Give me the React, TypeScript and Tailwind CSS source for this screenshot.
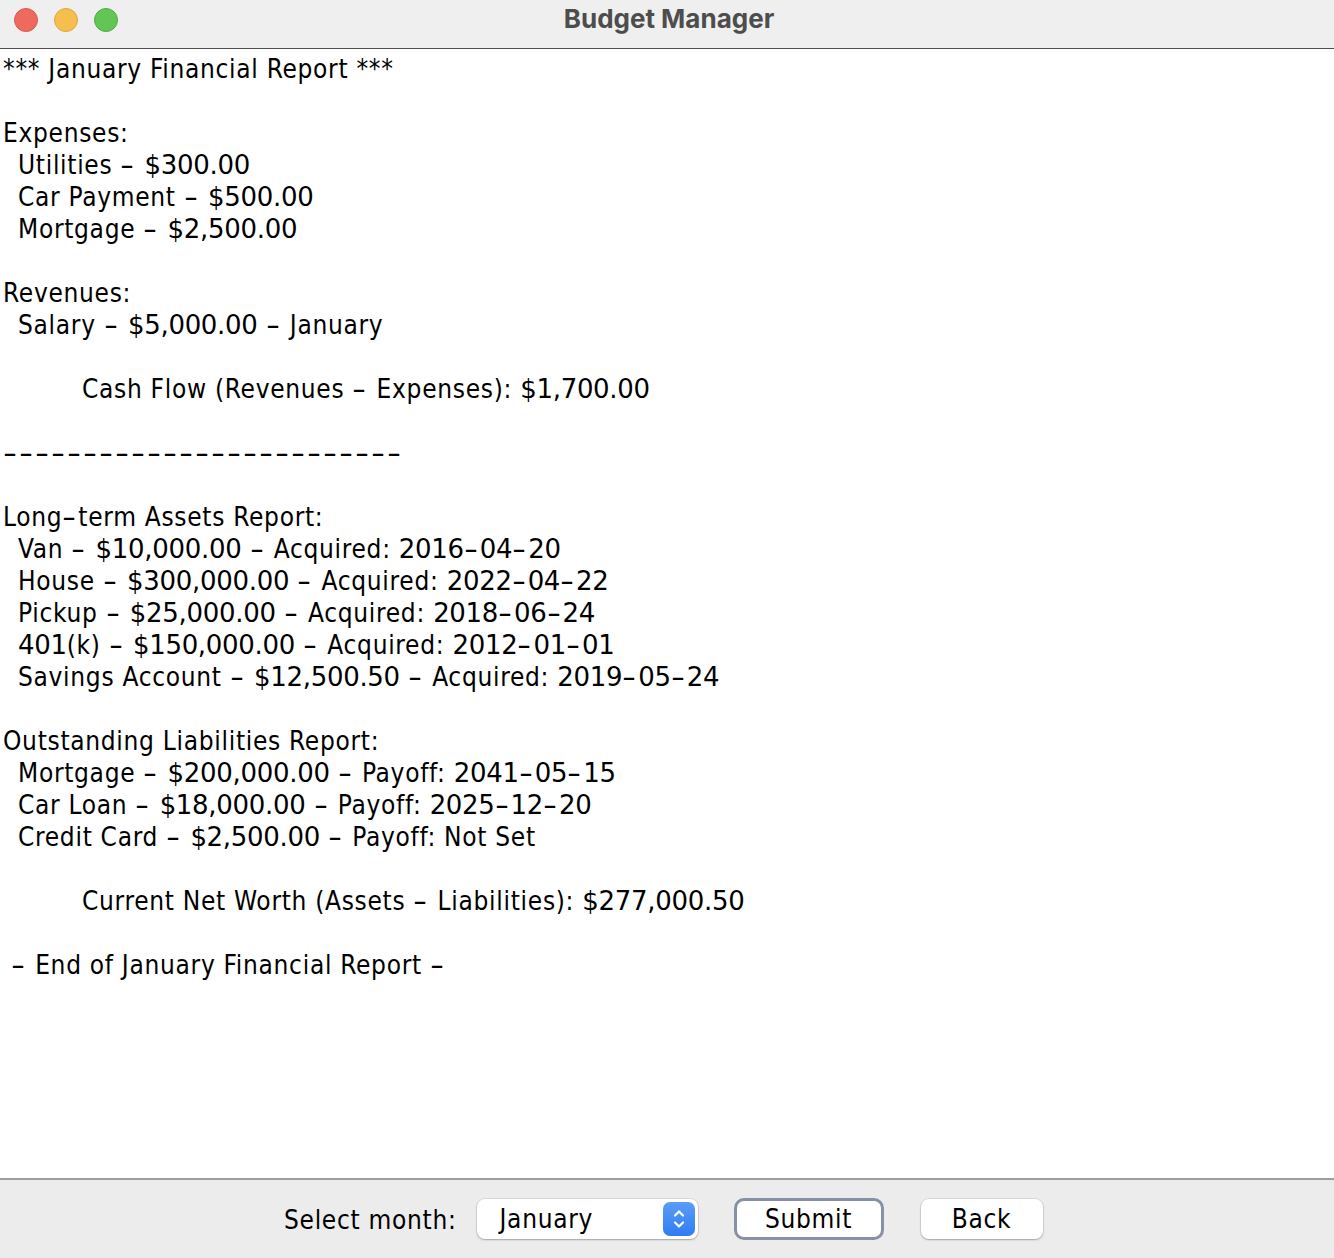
import React from "react";

type Line = { text: string; indent?: number };

// pl per indent level: none, two spaces, tab, the one-space end line
const indentCls = ["pl-[3px]", "pl-[18px]", "pl-[82px]", "pl-[11px]"];

const report: Line[] = [
  { text: "*** January Financial Report ***" },
  { text: "" },
  { text: "Expenses:" },
  { text: "Utilities - $300.00", indent: 1 },
  { text: "Car Payment - $500.00", indent: 1 },
  { text: "Mortgage - $2,500.00", indent: 1 },
  { text: "" },
  { text: "Revenues:" },
  { text: "Salary - $5,000.00 - January", indent: 1 },
  { text: "" },
  { text: "Cash Flow (Revenues - Expenses): $1,700.00", indent: 2 },
  { text: "" },
  { text: "-------------------------" },
  { text: "" },
  { text: "Long-term Assets Report:" },
  { text: "Van - $10,000.00 - Acquired: 2016-04-20", indent: 1 },
  { text: "House - $300,000.00 - Acquired: 2022-04-22", indent: 1 },
  { text: "Pickup - $25,000.00 - Acquired: 2018-06-24", indent: 1 },
  { text: "401(k) - $150,000.00 - Acquired: 2012-01-01", indent: 1 },
  { text: "Savings Account - $12,500.50 - Acquired: 2019-05-24", indent: 1 },
  { text: "" },
  { text: "Outstanding Liabilities Report:" },
  { text: "Mortgage - $200,000.00 - Payoff: 2041-05-15", indent: 1 },
  { text: "Car Loan - $18,000.00 - Payoff: 2025-12-20", indent: 1 },
  { text: "Credit Card - $2,500.00 - Payoff: Not Set", indent: 1 },
  { text: "" },
  { text: "Current Net Worth (Assets - Liabilities): $277,000.50", indent: 2 },
  { text: "" },
  { text: "- End of January Financial Report -", indent: 3 },
];

// digits are wider than the condensed face, so they get the regular one
const Rich = ({ text }: { text: string }) => {
  const parts = text.split(/([0-9$.,]+|-)/);
  return (
    <>
      {parts.map((p, i) => {
        if (!p) return null;
        if (p === "-")
          return (
            <span key={i} className="inline-block w-[16px] tracking-normal font-['DejaVu_Sans',sans-serif]">
              <span className="inline-block origin-left scale-x-150">-</span>
            </span>
          );
        if (/^[0-9$.,]+$/.test(p))
          return (
            <span key={i} className="tracking-[-0.3px] font-['DejaVu_Sans',sans-serif]">
              {p}
            </span>
          );
        return <span key={i}>{p}</span>;
      })}
    </>
  );
};

const Stepper = () => (
  <div className="w-[32px] h-[34px] rounded-[7px] bg-gradient-to-b from-[#5b9cf8] to-[#2f7cf1] flex items-center justify-center">
    <svg width="14" height="24" viewBox="0 0 14 24" fill="none">
      <path d="M3 8.5 L7 4.5 L11 8.5" stroke="white" strokeWidth="2.2" strokeLinecap="round" strokeLinejoin="round" />
      <path d="M3 15.5 L7 19.5 L11 15.5" stroke="white" strokeWidth="2.2" strokeLinecap="round" strokeLinejoin="round" />
    </svg>
  </div>
);

const App = () => {
  return (
    <div className="w-full h-[1258px] flex flex-col bg-white text-black tracking-[0.7px] font-['DejaVu_Sans_Condensed','DejaVu_Sans',sans-serif]">
      {/* title bar */}
      <div className="h-[49px] shrink-0 border-b border-[#4f4f4f] bg-[#efefef] relative flex items-center justify-center">
        <div className="absolute left-[14px] top-[8px] flex gap-[16px]">
          <span className="w-[24px] h-[24px] rounded-full bg-[#ee6a5f] border border-[#d85a50]" />
          <span className="w-[24px] h-[24px] rounded-full bg-[#f5bf4f] border border-[#dea53c]" />
          <span className="w-[24px] h-[24px] rounded-full bg-[#62c554] border border-[#51ad45]" />
        </div>
        <h1 className="text-[26px] font-bold tracking-normal text-[#4d4d4d] font-['Inter',sans-serif] -mt-[12px] ml-[4px]">
          Budget Manager
        </h1>
      </div>

      {/* report text */}
      <div className="flex-1 pt-[4px] text-[26px] leading-[32px]">
        {report.map((l, i) => (
          <div key={i} className={`h-[32px] whitespace-pre ${indentCls[l.indent ?? 0]}`}>
            <Rich text={l.text} />
          </div>
        ))}
      </div>

      {/* bottom controls */}
      <div className="h-[80px] shrink-0 border-t-2 border-[#9d9d9d] bg-[#ececec] flex items-center pl-[284px] text-[26px]">
        <span className="mr-[20px] mt-[3px]">Select month:</span>
        <div className="w-[221px] h-[40px] rounded-[8px] bg-white shadow-[0_0_0_1px_rgba(0,0,0,0.07),0_1px_2px_rgba(0,0,0,0.25)] flex items-center justify-between pl-[23px] pr-[3px]">
          <span>January</span>
          <Stepper />
        </div>
        <button className="ml-[36px] w-[150px] h-[42px] rounded-[10px] bg-white border-[3px] border-[#8691a6] flex items-center justify-center">
          Submit
        </button>
        <button className="ml-[37px] w-[122px] h-[40px] rounded-[8px] bg-white shadow-[0_0_0_1px_rgba(0,0,0,0.07),0_1px_2px_rgba(0,0,0,0.25)] flex items-center justify-center">
          Back
        </button>
      </div>
    </div>
  );
};

export default App;
